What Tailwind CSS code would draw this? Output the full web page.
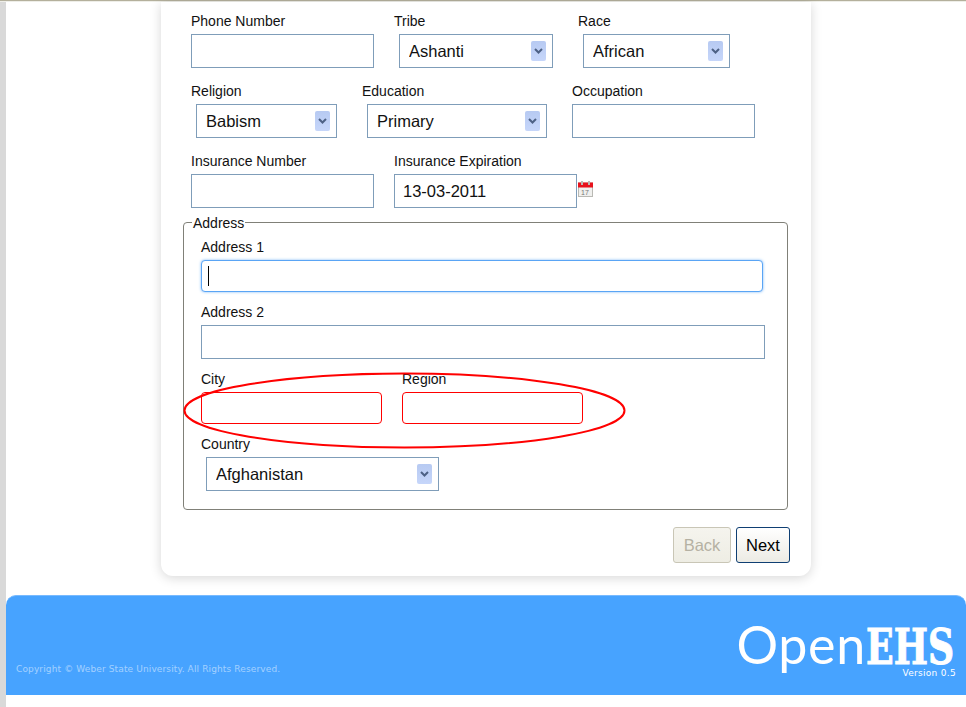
<!DOCTYPE html>
<html lang="en">
<head>
    <meta charset="UTF-8">
    <title>OpenEHS - Patient Registration</title>
    <script src="https://cdn.jsdelivr.net/npm/@tailwindcss/browser@4"></script>
</head>
<body class="bg-white font-['Liberation_Sans',Arial,sans-serif] text-[#111]">
<div class="relative h-[707px] w-[966px] overflow-hidden">
    <!-- top edge -->
    <div class="h-px bg-[#b4b09c]"></div>
    <div class="h-px bg-[#eeeee8]"></div>

    <div class="flex h-[705px]">
        <div class="w-[6px] shrink-0 bg-[#d9d9d9]"></div>

        <div class="w-[960px]">
            <!-- form card -->
            <div class="ml-[155px] w-[650px] rounded-b-xl bg-white pl-[30px] pr-[21px] pt-[12px] pb-[13px] shadow-[0_2px_12px_rgba(0,0,0,0.16)]">

                <div class="flex">
                    <div class="mr-[20px]">
                        <label class="block h-[20px] text-[14px] leading-[14px]">Phone Number</label>
                        <input type="text" class="block h-[34px] w-[183px] border border-[#7f9db9] bg-white">
                    </div>
                    <div class="mr-[25px]">
                        <label class="block h-[20px] text-[14px] leading-[14px]">Tribe</label>
                        <div class="relative ml-[5px] w-[154px]">
                            <select class="block h-[34px] w-full appearance-none border border-[#7f9db9] bg-white pl-[9px] text-[16.5px]"><option>Ashanti</option></select>
                            <span class="absolute right-[7px] top-[7px] flex h-[20px] w-[15px] items-center justify-center rounded-[2px] bg-gradient-to-b from-[#b7caf2] to-[#c6d6fa]">
                                <svg width="9" height="6" viewBox="0 0 9 6"><path d="M1 1 L4.5 4.5 L8 1" fill="none" stroke="#4d6185" stroke-width="2"/></svg>
                            </span>
                        </div>
                    </div>
                    <div>
                        <label class="block h-[20px] text-[14px] leading-[14px]">Race</label>
                        <div class="relative ml-[5px] w-[147px]">
                            <select class="block h-[34px] w-full appearance-none border border-[#7f9db9] bg-white pl-[9px] text-[16.5px]"><option>African</option></select>
                            <span class="absolute right-[7px] top-[7px] flex h-[20px] w-[15px] items-center justify-center rounded-[2px] bg-gradient-to-b from-[#b7caf2] to-[#c6d6fa]">
                                <svg width="9" height="6" viewBox="0 0 9 6"><path d="M1 1 L4.5 4.5 L8 1" fill="none" stroke="#4d6185" stroke-width="2"/></svg>
                            </span>
                        </div>
                    </div>
                </div>

                <div class="mt-[16px] flex">
                    <div class="mr-[25px]">
                        <label class="block h-[20px] text-[14px] leading-[14px]">Religion</label>
                        <div class="relative ml-[5px] w-[141px]">
                            <select class="block h-[34px] w-full appearance-none border border-[#7f9db9] bg-white pl-[9px] text-[16.5px]"><option>Babism</option></select>
                            <span class="absolute right-[7px] top-[7px] flex h-[20px] w-[15px] items-center justify-center rounded-[2px] bg-gradient-to-b from-[#b7caf2] to-[#c6d6fa]">
                                <svg width="9" height="6" viewBox="0 0 9 6"><path d="M1 1 L4.5 4.5 L8 1" fill="none" stroke="#4d6185" stroke-width="2"/></svg>
                            </span>
                        </div>
                    </div>
                    <div class="mr-[25px]">
                        <label class="block h-[20px] text-[14px] leading-[14px]">Education</label>
                        <div class="relative ml-[5px] w-[180px]">
                            <select class="block h-[34px] w-full appearance-none border border-[#7f9db9] bg-white pl-[9px] text-[16.5px]"><option>Primary</option></select>
                            <span class="absolute right-[7px] top-[7px] flex h-[20px] w-[15px] items-center justify-center rounded-[2px] bg-gradient-to-b from-[#b7caf2] to-[#c6d6fa]">
                                <svg width="9" height="6" viewBox="0 0 9 6"><path d="M1 1 L4.5 4.5 L8 1" fill="none" stroke="#4d6185" stroke-width="2"/></svg>
                            </span>
                        </div>
                    </div>
                    <div>
                        <label class="block h-[20px] text-[14px] leading-[14px]">Occupation</label>
                        <input type="text" class="block h-[34px] w-[183px] border border-[#7f9db9] bg-white">
                    </div>
                </div>

                <div class="mt-[16px] flex">
                    <div class="mr-[20px]">
                        <label class="block h-[20px] text-[14px] leading-[14px]">Insurance Number</label>
                        <input type="text" class="block h-[34px] w-[183px] border border-[#7f9db9] bg-white">
                    </div>
                    <div>
                        <label class="block h-[20px] text-[14px] leading-[14px]">Insurance Expiration</label>
                        <div class="flex items-start">
                            <input type="text" value="13-03-2011" class="block h-[34px] w-[183px] border border-[#7f9db9] bg-white pl-[8px] text-[16.5px]">
                            <svg class="ml-px mt-[7px]" width="15" height="16" viewBox="0 0 15 16">
                                <rect x="0.5" y="2" width="14" height="13.5" fill="#f0f0ee" stroke="#b9b9b4"/>
                                <rect x="0" y="1.5" width="15" height="5" fill="#e8121c"/>
                                <rect x="3" y="0" width="2" height="4" fill="#b9b9b4"/>
                                <rect x="10" y="0" width="2" height="4" fill="#b9b9b4"/>
                                <text x="3" y="13.5" font-size="7" font-family="Liberation Sans" fill="#777">17</text>
                            </svg>
                        </div>
                    </div>
                </div>

                <!-- address -->
                <fieldset class="mt-[5px] -ml-[8px] w-[605px] rounded-[4px] border border-[#808078] pl-[17px] pb-[18px]">
                    <legend class="-ml-[9px] px-[1px] pt-[2px] text-[14px] leading-[16px]">Address</legend>
                    <div class="pt-[9px]">
                        <label class="block h-[20px] text-[14px] leading-[14px]">Address 1</label>
                        <div class="relative w-[562px]">
                            <input type="text" class="block h-[32px] w-full rounded-[4px] border border-[#5aa5f5] bg-white shadow-[0_0_3px_#7fb9f7]">
                            <span class="absolute left-[7px] top-[6px] h-[20px] w-px bg-black"></span>
                        </div>
                    </div>
                    <div class="mt-[13px]">
                        <label class="block h-[20px] text-[14px] leading-[14px]">Address 2</label>
                        <input type="text" class="block h-[34px] w-[564px] border border-[#7f9db9] bg-white">
                    </div>
                    <div class="mt-[13px] flex gap-[20px]">
                        <div>
                            <label class="block h-[20px] text-[14px] leading-[14px]">City</label>
                            <input type="text" class="block h-[32px] w-[181px] rounded-[4px] border border-[#f00] bg-white">
                        </div>
                        <div>
                            <label class="block h-[20px] text-[14px] leading-[14px]">Region</label>
                            <input type="text" class="block h-[32px] w-[181px] rounded-[4px] border border-[#f00] bg-white">
                        </div>
                    </div>
                    <div class="mt-[13px]">
                        <label class="block h-[20px] text-[14px] leading-[14px]">Country</label>
                        <div class="relative ml-[5px] w-[233px]">
                            <select class="block h-[34px] w-full appearance-none border border-[#7f9db9] bg-white pl-[9px] text-[16.5px]"><option>Afghanistan</option></select>
                            <span class="absolute right-[7px] top-[7px] flex h-[20px] w-[15px] items-center justify-center rounded-[2px] bg-gradient-to-b from-[#b7caf2] to-[#c6d6fa]">
                                <svg width="9" height="6" viewBox="0 0 9 6"><path d="M1 1 L4.5 4.5 L8 1" fill="none" stroke="#4d6185" stroke-width="2"/></svg>
                            </span>
                        </div>
                    </div>
                </fieldset>

                <div class="mt-[17px] flex justify-end gap-[5px]">
                    <button class="h-[36px] w-[58px] rounded-[3px] border border-[#c9c6b6] bg-gradient-to-b from-[#f5f4ee] to-[#eeede4] text-[16.5px] text-[#b5b1a3]">Back</button>
                    <button class="h-[36px] w-[54px] rounded-[3px] border border-[#0f3f73] bg-gradient-to-b from-white to-[#ecebe4] text-[16.5px] text-black">Next</button>
                </div>
            </div>

            <!-- footer -->
            <div class="mt-[19px] flex h-[100px] items-end justify-between rounded-t-[10px] border-t border-[#78baff] bg-[#47a3ff] pl-[10px] pr-[10px]">
                <p class="mb-[20px] font-['DejaVu_Sans',sans-serif] text-[9px] leading-[12px] tracking-[0.13px] text-white/50">Copyright © Weber State University. All Rights Reserved.</p>
                <div class="flex flex-col items-end text-white">
                    <div class="flex h-[52px] translate-y-[3px] items-baseline leading-[52px]">
                        <span class="font-['Lato',sans-serif] text-[52px] tracking-[0.7px]">Open</span><span class="w-[90px] origin-left scale-x-[0.74] font-['DejaVu_Serif',serif] text-[49px] font-bold [-webkit-text-stroke:1px_white]">EHS</span>
                    </div>
                    <span class="mb-[16px] font-['DejaVu_Sans',sans-serif] text-[9px] leading-[12px] tracking-[0.3px]">Version 0.5</span>
                </div>
            </div>
        </div>
    </div>

    <!-- red annotation circled on the screenshot -->
    <svg class="pointer-events-none absolute left-[183px] top-[372px]" width="443" height="77" viewBox="0 0 443 77">
        <ellipse cx="221.5" cy="38.5" rx="220" ry="37" fill="none" stroke="#f00" stroke-width="2"/>
    </svg>
</div>
</body>
</html>
